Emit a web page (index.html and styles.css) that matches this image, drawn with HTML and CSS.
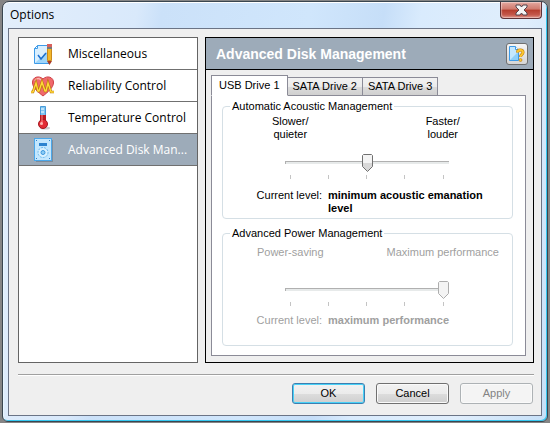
FILE: index.html
```
<!DOCTYPE html>
<html lang="en">
<head>
    <meta charset="UTF-8">
    <meta name="viewport" content="width=device-width, initial-scale=1.0">
    <title>Options</title>
    <link rel="stylesheet" href="styles.css">
</head>
<body>
    <div class="window">
        <header class="titlebar">
            <h1 class="title">Options</h1>
            <button class="close" aria-label="Close">
                <svg width="13" height="12" viewBox="0 0 13 12"><path d="M1 1h4l1.500 2L8 1h4v2L9 6l3 3v2H8L6.500 9 5 11H1V9l3-3-3-3z" fill="#f4f4f4" stroke="#54444c"/></svg>
            </button>
        </header>

        <main class="client">
            <div class="content">
                <nav class="menu">
                    <button class="menu-item">
                        <svg class="icon" viewBox="0 0 24 24">
                            <path d="M6.500 3.500h12v18h-15v-15z" fill="#d9efff" stroke="#3e9be8"/>
                            <path d="M4 21L18 8v13z" fill="#9dd5fa"/>
                            <path d="M6.500 3.500v3h-3z" fill="#fff" stroke="#3e9be8"/>
                            <path d="M7 13l3 4 5-6" fill="none" stroke="#1c6fd0" stroke-width="1.500"/>
                            <path d="M16.500 6.500h4v12h-4z" fill="#f3b72b" stroke="#c98a1c"/>
                            <path d="M16 2h5v3h-5z" fill="#d8615c"/>
                            <path d="M16 5h5v2h-5z" fill="#777"/>
                            <path d="M16 19h5l-2.500 4z" fill="#a83a24"/>
                        </svg>
                        <span class="menu-label">Miscellaneous</span>
                    </button>
                    <button class="menu-item">
                        <svg class="icon" viewBox="0 0 24 24">
                            <path d="M12 22C7 18 2 14 1.500 9 1 3 8 1 12 5c4-4 11-2 10.500 4C22 14 17 18 12 22z" fill="#f0696c" stroke="#cf4047"/>
                            <path d="M4 7c1-3 4-3 6-1" fill="none" stroke="#ffb5b0" stroke-width="1.500"/>
                            <path d="M0 18h2l3-9 2 8 1 0 3-9 3 9 1 0 2-8 3 9h3" fill="none" stroke="#b97609" stroke-width="2.600"/>
                            <path d="M0 18h2l3-9 2 8 1 0 3-9 3 9 1 0 2-8 3 9h3" fill="none" stroke="#ffd83a" stroke-width="1.400"/>
                        </svg>
                        <span class="menu-label">Reliability Control</span>
                    </button>
                    <button class="menu-item">
                        <svg class="icon" viewBox="0 0 24 24">
                            <ellipse cx="14" cy="22" rx="5" ry="1.500" fill="#ccc"/>
                            <path d="M9.500.5h5v9h-5z" fill="#7fc6f2" stroke="#4a9bd8"/>
                            <path d="M10 3h3M10 6h3" stroke="#fff"/>
                            <path d="M9 9h6v6H9z" fill="#b81b22"/>
                            <circle cx="12" cy="18" r="4.500" fill="#e32d35" stroke="#a31820"/>
                            <path d="M11 9v8" stroke="#ff8a86"/>
                            <circle cx="10.500" cy="17.500" r="1.500" fill="#ffb8b2"/>
                        </svg>
                        <span class="menu-label">Temperature Control</span>
                    </button>
                    <button class="menu-item selected">
                        <svg class="icon" viewBox="0 0 24 24">
                            <path d="M5 2h17v22H5z" fill="#7e8c9b"/>
                            <rect x="3.500" y=".5" width="17" height="22" fill="#c3e7fe" stroke="#4ba7ea"/>
                            <rect x="8" y="5" width="8" height="3" fill="#2c83cf"/>
                            <circle cx="12" cy="14.500" r="5" fill="#d8f1ff" stroke="#6cb9ed" stroke-dasharray="2 1"/>
                            <circle cx="12" cy="14.500" r="2" fill="#8dcdf6" stroke="#3d97dc"/>
                            <path d="M5 2h1v1H5zM18 2h1v1h-1zM5 20h1v1H5zM18 20h1v1h-1z" fill="#2c83cf"/>
                        </svg>
                        <span class="menu-label">Advanced Disk Man...</span>
                    </button>
                </nav>

                <section class="panel">
                    <div class="panel-header">
                        <h2 class="panel-title">Advanced Disk Management</h2>
                        <button class="help" aria-label="Help">
                            <svg width="18" height="18" viewBox="0 0 18 18">
                                <path d="M1.500 1.500h6l3 3v11h-9z" fill="#c5e8fe" stroke="#3e9be8"/>
                                <path d="M2 15l8-8v8z" fill="#8fd0fa"/>
                                <path d="M7.500 1.500v3h3" fill="#fff" stroke="#3e9be8"/>
                                <path d="M9.500 7.500C9.500 4 15 4 15 7.500c0 2-2.500 2-2.500 4.500" fill="none" stroke="#b9790f" stroke-width="3"/>
                                <path d="M9.500 7.500C9.500 4 15 4 15 7.500c0 2-2.500 2-2.500 4.500" fill="none" stroke="#fcc62e" stroke-width="2"/>
                                <circle cx="12.500" cy="15" r="1.500" fill="#fcc62e" stroke="#b9790f" stroke-width=".6"/>
                            </svg>
                        </button>
                    </div>

                    <div class="tabs" role="tablist">
                        <button class="tab active" role="tab" aria-selected="true">USB Drive 1</button>
                        <button class="tab" role="tab" aria-selected="false">SATA Drive 2</button>
                        <button class="tab" role="tab" aria-selected="false">SATA Drive 3</button>
                    </div>

                    <div class="tab-page" role="tabpanel">
                        <fieldset class="group">
                            <legend>Automatic Acoustic Management</legend>
                            <div class="captions">
                                <span>Slower/<br>quieter</span>
                                <span>Faster/<br>louder</span>
                            </div>
                            <div class="slider">
                                <input type="range" min="0" max="4" value="2" aria-label="Automatic Acoustic Management">
                                <div class="ticks"><i></i><i></i><i></i><i></i><i></i></div>
                            </div>
                            <div class="level">
                                <span class="level-name">Current level:</span>
                                <strong class="level-value">minimum acoustic emanation level</strong>
                            </div>
                        </fieldset>

                        <fieldset class="group power" disabled>
                            <legend>Advanced Power Management</legend>
                            <div class="captions">
                                <span>Power-saving</span>
                                <span>Maximum performance</span>
                            </div>
                            <div class="slider">
                                <input type="range" min="0" max="4" value="4" aria-label="Advanced Power Management">
                                <div class="ticks"><i></i><i></i><i></i><i></i><i></i></div>
                            </div>
                            <div class="level">
                                <span class="level-name">Current level:</span>
                                <strong class="level-value">maximum performance</strong>
                            </div>
                        </fieldset>
                    </div>
                </section>
            </div>

            <footer class="footer">
                <button class="button default">OK</button>
                <button class="button">Cancel</button>
                <button class="button" disabled>Apply</button>
            </footer>
        </main>
    </div>
</body>
</html>
```
FILE: styles.css
```
* {
    box-sizing: border-box;
}

body {
    margin: 0;
    height: 100vh;
    padding: 1px 2px;
    display: flex;
    background-color: #858585;
    font-family: "Liberation Sans", Arial, sans-serif;
    font-size: 11px;
    line-height: 13px;
    color: #000;
}

button {
    margin: 0;
    padding: 0;
    border: none;
    font: inherit;
    color: inherit;
}

/* Window frame */
.window {
    flex: 1;
    min-width: 0;
    display: flex;
    flex-direction: column;
    padding: 0 5px 5px;
    border: 1px solid #3a4650;
    border-radius: 7px 7px 6px 6px;
    background: linear-gradient(100deg, #e2eefb 0%, #d9e9fb 22%, #cbe1f9 26%, #d0e6fc 50%, #c6def8 62%, #d9ebfd 68%, #e0eefc 85%, #c6e0f8 100%);
    box-shadow: inset 0 1px #fff, inset -1px -1px #35c8f0, inset 1px 0 #e8f6ff;
}

.titlebar {
    height: 26px;
    display: flex;
    justify-content: space-between;
    align-items: flex-start;
}

.title {
    margin: 0;
    padding: 5px 2px 0;
    font-family: "Open Sans", "Noto Sans", sans-serif;
    font-size: 12px;
    font-weight: normal;
    line-height: 16px;
}

.close {
    width: 42px;
    height: 17px;
    display: flex;
    justify-content: center;
    align-items: center;
    border: 1px solid #5e3237;
    border-top: none;
    border-radius: 0 0 4px 4px;
    background: linear-gradient(#e3a79e, #cf7a6e 45%, #b53c2c 50%, #c4584b 80%, #dd9187);
    box-shadow: inset 0 0 1px 1px rgba(255, 255, 255, 0.4);
}

.client {
    flex: 1;
    display: flex;
    flex-direction: column;
    padding: 8px 7px 11px 9px;
    border: 1px solid #6b7486;
    background-color: #efefef;
}

.content {
    flex: 1;
    display: flex;
    gap: 7px;
}

/* Left menu */
.menu {
    flex: 0 0 180px;
    border: 1px solid #646464;
    background-color: #fff;
}

.menu-item {
    width: 100%;
    height: 32px;
    display: flex;
    align-items: center;
    gap: 13px;
    padding-left: 12px;
    border-bottom: 1px solid #707070;
    background-color: #fff;
    font-family: "Open Sans", "Noto Sans", sans-serif;
    font-size: 12px;
    line-height: 16px;
}

.menu-item.selected {
    background-color: #9dabb9;
    color: #fff;
}

.icon {
    width: 24px;
    height: 24px;
}

/* Right panel */
.panel {
    flex: 1;
    display: flex;
    flex-direction: column;
    border: 1px solid #000;
}

.panel-header {
    height: 32px;
    display: flex;
    justify-content: space-between;
    align-items: center;
    padding: 0 5px 0 10px;
    border-bottom: 1px solid #000;
    background-color: #9dabb9;
}

.panel-title {
    margin: 0;
    font-size: 14px;
    line-height: 18px;
    color: #fff;
}

.help {
    width: 22px;
    height: 22px;
    display: flex;
    justify-content: center;
    align-items: center;
    border: 1px solid #707070;
    border-radius: 3px;
    background: linear-gradient(#f5f5f5, #d5d5d5);
}

.tabs {
    display: flex;
    align-items: flex-end;
    margin: 5px 5px 0;
}

.tab {
    height: 19px;
    padding: 0 5px;
    border: 1px solid #8b8b97;
    border-left-width: 0;
    background: linear-gradient(#f2f2f2, #ebebeb 50%, #dcdcdc 50%, #d0d0d0);
}

.tab.active {
    z-index: 1;
    height: 21px;
    padding: 0 7px;
    border-left-width: 1px;
    border-bottom-color: #fff;
    background: #fff;
}

.tab-page {
    flex: 1;
    display: flex;
    flex-direction: column;
    gap: 8px;
    margin: -1px 7px 6px 5px;
    padding: 4px 12px 9px 10px;
    border: 1px solid #8b8b97;
    background-color: #fff;
}

/* Group boxes */
.group {
    flex: 1;
    min-width: 0;
    margin: 0;
    padding: 2px 9px 0 7px;
    border: 1px solid #d5dfe5;
    border-radius: 4px;
}

.group legend {
    padding: 0 2px;
    color: #000;
}

.captions {
    display: grid;
    grid-template-columns: 1fr 1fr;
    margin: 0 -16px;
    min-height: 38px;
    text-align: center;
}

.slider {
    width: 164px;
    margin: 0 auto;
}

.slider input {
    display: block;
    width: 100%;
    height: 18px;
    margin: 0;
    background: none;
    appearance: none;
    -webkit-appearance: none;
}

.slider input::-webkit-slider-runnable-track {
    height: 3px;
    border-top: 1px solid #b0b0b0;
    border-left: 1px solid #b0b0b0;
    background-color: #e7eaea;
}

.slider input::-webkit-slider-thumb {
    -webkit-appearance: none;
    width: 11px;
    height: 18px;
    margin-top: -8px;
    background: url("data:image/svg+xml,%3Csvg xmlns='http://www.w3.org/2000/svg' width='11' height='18'%3E%3Cdefs%3E%3ClinearGradient id='g' x2='0' y2='1'%3E%3Cstop offset='.5' stop-color='%23f4f4f4'/%3E%3Cstop offset='.5' stop-color='%23d8d8d8'/%3E%3C/linearGradient%3E%3C/defs%3E%3Cpath d='M1.500.5h8l1 1v11l-5 5-5-5v-11z' fill='url(%23g)' stroke='%23707070'/%3E%3C/svg%3E") no-repeat;
}

.slider input:disabled::-webkit-slider-thumb {
    background: url("data:image/svg+xml,%3Csvg xmlns='http://www.w3.org/2000/svg' width='11' height='18'%3E%3Cpath d='M1.500.5h8l1 1v11l-5 5-5-5v-11z' fill='%23f4f4f4' stroke='%23adadad'/%3E%3C/svg%3E") no-repeat;
}

.ticks {
    display: flex;
    justify-content: space-between;
    padding: 4px 5px 0;
}

.ticks i {
    width: 1px;
    height: 4px;
    background-color: #c4c4c4;
}

.level {
    display: grid;
    grid-template-columns: 92px 1fr;
    gap: 6px;
    margin-top: 10px;
}

.level-name {
    text-align: right;
}

.power {
    color: #a0a0a0;
}

.power .captions {
    padding-top: 4px;
}

.power .level {
    margin-top: 8px;
}

/* Bottom buttons */
.footer {
    display: flex;
    justify-content: flex-end;
    gap: 11px;
    margin-top: 11px;
    padding: 8px 1px 0 0;
    border-top: 1px solid #a0a0a0;
    box-shadow: inset 0 1px #fff;
}

.button {
    width: 73px;
    height: 21px;
    border: 1px solid #707070;
    border-radius: 3px;
    background: linear-gradient(#f2f2f2, #ebebeb 50%, #dddddd 50%, #cfcfcf);
    box-shadow: inset 0 0 0 1px #fafafa;
}

.button.default {
    border-color: #3c7fb1;
    box-shadow: inset 0 0 0 1px #48d1f7;
}

.button:disabled {
    border-color: #adb2b5;
    background: #f4f4f4;
    color: #838383;
}
```
